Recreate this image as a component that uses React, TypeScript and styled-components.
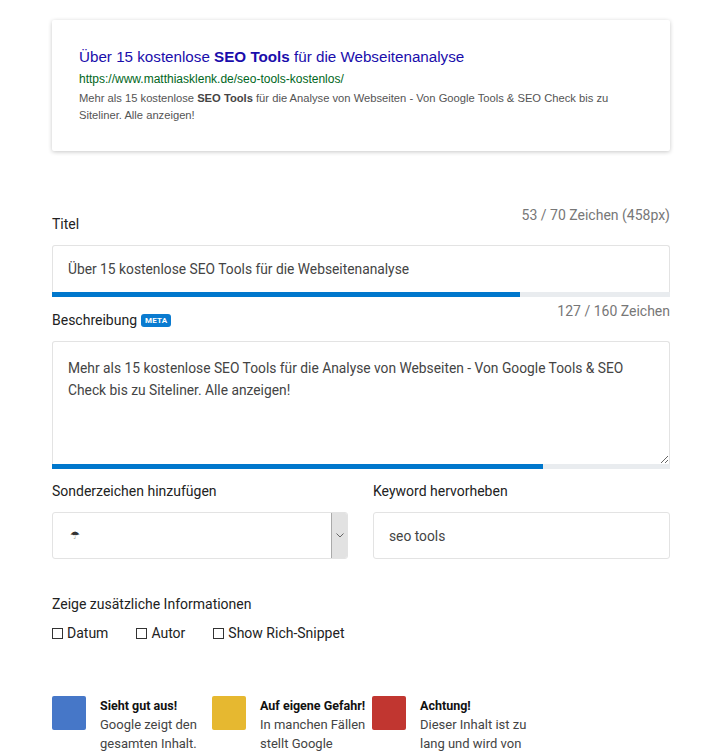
import React from "react";
import styled, { createGlobalStyle } from "styled-components";

const GlobalStyle = createGlobalStyle`
  html, body {
    margin: 0;
    padding: 0;
    background: #fff;
  }
  body {
    font-family: Roboto, "Liberation Sans", Arial, sans-serif;
    color: #222;
  }
`;

type Legend = { color: string; title: string; text: string };

const legends: Legend[] = [
  { color: "#4677c8", title: "Sieht gut aus!", text: "Google zeigt den gesamten Inhalt." },
  { color: "#e6b830", title: "Auf eigene Gefahr!", text: "In manchen Fällen stellt Google" },
  { color: "#c13630", title: "Achtung!", text: "Dieser Inhalt ist zu lang und wird von" },
];

const App: React.FC = () => {
  return (
    <>
      <GlobalStyle />
      <SPage>
        {/* Vorschau */}
        <SPreview>
          <SSerpTitle>
            Über 15 kostenlose <b>SEO Tools</b> für die Webseitenanalyse
          </SSerpTitle>
          <SSerpUrl>https://www.matthiasklenk.de/seo-tools-kostenlos/</SSerpUrl>
          <SSerpDesc>
            Mehr als 15 kostenlose <b>SEO Tools</b> für die Analyse von Webseiten - Von Google Tools &amp; SEO Check bis zu
            <br />
            Siteliner. Alle anzeigen!
          </SSerpDesc>
        </SPreview>

        {/* Titel */}
        <SFieldHead $first>
          <SLabel>Titel</SLabel>
          <SCounter>53 / 70 Zeichen (458px)</SCounter>
        </SFieldHead>
        <SInput defaultValue="Über 15 kostenlose SEO Tools für die Webseitenanalyse" />
        <SProgress>
          <SProgressFill style={{ width: `${(53 / 70) * 100}%` }} />
        </SProgress>

        {/* Beschreibung */}
        <SFieldHead>
          <SLabel>
            Beschreibung <SBadge>META</SBadge>
          </SLabel>
          <SCounter>127 / 160 Zeichen</SCounter>
        </SFieldHead>
        <STextarea defaultValue="Mehr als 15 kostenlose SEO Tools für die Analyse von Webseiten - Von Google Tools & SEO Check bis zu Siteliner. Alle anzeigen!" />
        <SProgress>
          <SProgressFill style={{ width: `${(127 / 160) * 100}%` }} />
        </SProgress>

        <SRow>
          <SCol>
            <SSmallLabel>Sonderzeichen hinzufügen</SSmallLabel>
            <SSelect>
              <SSelectValue>☂</SSelectValue>
              <SSelectArrow>
                <svg width="8" height="5" viewBox="0 0 8 5">
                  <path d="M0.5 0.5 L4 4 L7.5 0.5" fill="none" stroke="#666" strokeWidth="1" />
                </svg>
              </SSelectArrow>
            </SSelect>
          </SCol>
          <SCol>
            <SSmallLabel>Keyword hervorheben</SSmallLabel>
            <SSmallInput defaultValue="seo tools" />
          </SCol>
        </SRow>

        <SExtra>
          <SSmallLabel>Zeige zusätzliche Informationen</SSmallLabel>
          <SChecks>
            <SCheck>
              <SBox />
              Datum
            </SCheck>
            <SCheck>
              <SBox />
              Autor
            </SCheck>
            <SCheck>
              <SBox />
              Show Rich-Snippet
            </SCheck>
          </SChecks>
        </SExtra>

        <SLegend>
          {legends.map((l) => (
            <SLegendItem key={l.title}>
              <SSwatch $color={l.color} />
              <div>
                <SLegendTitle>{l.title}</SLegendTitle>
                <SLegendText>{l.text}</SLegendText>
              </div>
            </SLegendItem>
          ))}
        </SLegend>
      </SPage>
    </>
  );
};

export default App;

const SPage = styled.div`
  width: 618px;
  margin-left: 52px;
  padding-top: 20px;
`;

const SPreview = styled.div`
  box-shadow: 0 1px 4px rgba(0, 0, 0, 0.22);
  border-radius: 2px;
  padding: 26px 27px 27px;
  font-family: "Liberation Sans", Arial, sans-serif;
`;

const SSerpTitle = styled.div`
  color: #1a0dab;
  font-size: 15.2px;
  line-height: 22px;

  b {
    font-weight: bold;
  }
`;

const SSerpUrl = styled.div`
  color: #006621;
  font-size: 12px;
  line-height: 16px;
  margin-top: 3px;
`;

const SSerpDesc = styled.div`
  color: #545454;
  font-size: 11.2px;
  line-height: 17px;
  margin-top: 3px;

  b {
    color: #444;
  }
`;

const SFieldHead = styled.div<{ $first?: boolean }>`
  display: flex;
  justify-content: space-between;
  align-items: flex-start;
  margin-top: ${(p) => (p.$first ? "56px" : "6px")};
  height: 38px;
`;

const SLabel = styled.div`
  font-size: 14px;
  color: #222;
  padding-top: 9px;
  display: flex;
  align-items: center;
  gap: 4px;
`;

const SCounter = styled.div`
  font-size: 14px;
  color: #777;
`;

const SBadge = styled.span`
  background: #0a7bd0;
  color: #fff;
  font-size: 8px;
  font-weight: bold;
  padding: 2px 4px;
  border-radius: 3px;
  letter-spacing: 0.2px;
`;

const SInput = styled.input`
  box-sizing: border-box;
  display: block;
  width: 100%;
  height: 47px;
  border: 1px solid #e3e3e3;
  border-bottom: none;
  border-radius: 3px 3px 0 0;
  padding: 0 15px;
  font-family: Roboto, sans-serif;
  font-size: 13.8px;
  color: #444;
  outline: none;
`;

const STextarea = styled.textarea`
  box-sizing: border-box;
  display: block;
  width: 100%;
  height: 123px;
  border: 1px solid #e3e3e3;
  border-bottom: none;
  border-radius: 3px 3px 0 0;
  padding: 15px 15px;
  font-family: Roboto, sans-serif;
  font-size: 13.8px;
  line-height: 22px;
  color: #444;
  outline: none;
  resize: vertical;
`;

const SProgress = styled.div`
  height: 5px;
  background: #e9ecef;
`;

const SProgressFill = styled.div`
  height: 100%;
  background: #0077cc;
`;

const SRow = styled.div`
  display: grid;
  grid-template-columns: 296px 297px;
  justify-content: space-between;
  margin-top: 12px;
`;

const SCol = styled.div`
  display: flex;
  flex-direction: column;
`;

const SSmallLabel = styled.div`
  font-size: 14px;
  color: #222;
  line-height: 20px;
  margin-bottom: 11px;
`;

const SSelect = styled.div`
  box-sizing: border-box;
  height: 47px;
  border: 1px solid #e3e3e3;
  border-radius: 3px;
  display: flex;
  justify-content: space-between;
  overflow: hidden;
`;

const SSelectValue = styled.span`
  padding-left: 17px;
  display: flex;
  align-items: center;
  font-family: "DejaVu Sans", sans-serif;
  font-size: 11px;
  color: #333;
`;

const SSelectArrow = styled.span`
  width: 15px;
  background: #e2e2e2;
  border-left: 1px solid #aaa;
  display: flex;
  align-items: center;
  justify-content: center;
`;

const SSmallInput = styled(SInput)`
  border-bottom: 1px solid #e3e3e3;
  border-radius: 3px;
`;

const SExtra = styled.div`
  margin-top: 35px;
`;

const SChecks = styled.div`
  display: flex;
  gap: 28px;
  margin-top: 5px;
`;

const SCheck = styled.label`
  display: flex;
  align-items: center;
  gap: 4px;
  font-size: 14px;
  color: #222;
`;

const SBox = styled.span`
  box-sizing: border-box;
  width: 11px;
  height: 11px;
  border: 1px solid #333;
`;

const SLegend = styled.div`
  display: flex;
  margin-top: 55px;
`;

const SLegendItem = styled.div`
  width: 160px;
  display: flex;
  gap: 14px;
`;

const SSwatch = styled.div<{ $color: string }>`
  flex: none;
  width: 34px;
  height: 34px;
  border-radius: 2px;
  background: ${(p) => p.$color};
`;

const SLegendTitle = styled.div`
  font-size: 12.5px;
  font-weight: bold;
  color: #111;
  line-height: 18px;
  margin-top: 1px;
`;

const SLegendText = styled.div`
  font-size: 13px;
  color: #444;
  line-height: 19px;
  width: 112px;
`;
